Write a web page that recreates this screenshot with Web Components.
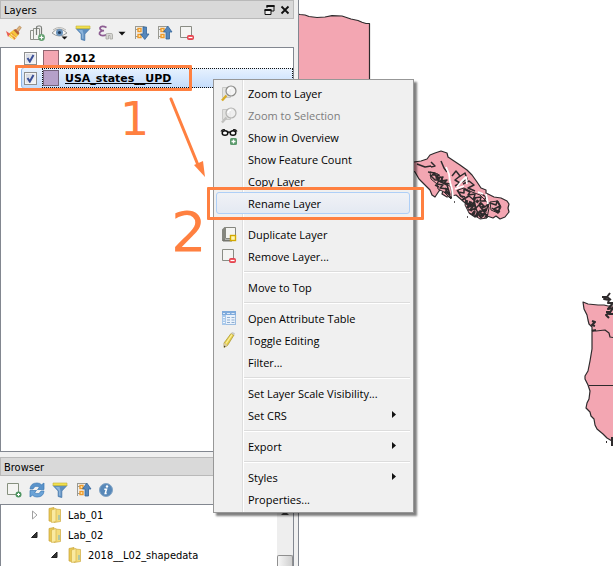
<!DOCTYPE html>
<html lang="en">
<head>
<meta charset="utf-8">
<title>Layers</title>
<style>
  html, body { height: 100%; margin: 0; }
  body { overflow: hidden; background: #fff; font: 11px/20px "DejaVu Sans Condensed", "DejaVu Sans", sans-serif; color: #000; }
</style>
</head>
<body>
<gis-window></gis-window>
<script>
const tree = '<path d="M2.5 1v13M2.5 4.5h4M2.5 11.500h4M2.5 1.500h9" fill="none" stroke="#9a9a92"/><path d="M5 3.500h3v3h-3zM5 9.500h3v3h-3z" fill="#fff3c8" stroke="#ee9a2a" stroke-width="1.400"/>';
const lens = (ring, glass, handle, page) => `<path d="M1.500 2.500h8v10h-8z" fill="${page}" stroke="#c8c8c6"/><path d="M5.500 10.500L1 15.500" stroke="${handle}" stroke-width="2.400"/><circle cx="10" cy="6" r="5" fill="${glass}" fill-opacity=".85" stroke="${ring}" stroke-width="1.200"/><path d="M7 6q0-3 3-3" fill="none" stroke="#fff" stroke-width="1.500"/>`;
const funnel = '<path d="M1 3.500h14L9.800 9v6.500l-3.600-1V9z" fill="#5f8fc0" stroke="#4679ac" stroke-width=".8"/><path d="M3.500 5h4l1 4v5l-1.500-.6V9z" fill="#8db4da"/><path d="M1 1h14v2.600H1z" fill="#f1e04d" stroke="#c6b432" stroke-width=".6"/>';
const minus = '<rect x="8.500" y="10.500" width="6" height="4" rx="1" fill="#ef4c55" stroke="#e04450"/><path d="M9.500 12.500h4" stroke="#fff" stroke-width="1.200"/>';
const plus = '<rect x="9" y="9" width="7" height="7" rx="1.500" fill="#5b9a6c"/><path d="M12.500 10.500v4M10.500 12.500h4" stroke="#fff" stroke-width="1.300"/>';
const ICONS = {
  brush: '<path d="M9 6l4.500-5 1.800 1.500L11.500 8z" fill="#e0b27a" stroke="#a87c48" stroke-width=".6"/><path d="M1.500 9.500L8 4.500l5 5-5 5q-4-1-6.500-5z" fill="#f5c63c"/><path d="M7.500 5l2-1 4 4-1.500 2z" fill="#b55f35"/><path d="M5 7l5.500 5.500L8 15z" fill="#e88035"/><path d="M0 6l4.500 3-2.500 3z" fill="#ea6055"/><path d="M3 10.500l5 4M5 9l5 4" stroke="#fff08a"/>',
  group: '<path d="M1.500 5.500h3v9h-3zM4.500 3.500h6v11h-6z" fill="#f3f3f1" stroke="#8e918a"/><path d="M7.500 10V3q0-2 2-2h1.500q1.500 0 1.500 2v6" fill="none" stroke="#777b76" stroke-width="1.200"/><circle cx="12.500" cy="12.500" r="3.400" fill="#63a070"/><path d="M12.500 10.500v4M10.500 12.500h4" stroke="#fff" stroke-width="1.200"/>',
  eye: '<path d="M0 8q7-8 15 0-8 6-15 0z" fill="#f5f5f3" stroke="#9a9c9c"/><path d="M1 5q6-5 13 0" fill="none" stroke="#b5b5b2"/><circle cx="7.500" cy="7.500" r="3.500" fill="#6b94bd"/><circle cx="7.500" cy="7.500" r="1.600" fill="#233b58"/><path d="M9.500 11.500h6l-3 3z" fill="#111"/>',
  funnel,
  epsilon: '<path d="M8.500 2.500q-5-2.500-6.500.5 0 2.500 4 2.700Q1 6 1.500 9q2 3 7.500.5" fill="none" stroke="#8d5d92" stroke-width="1.800"/><path d="M8 14V9.500q0-1 1.500-1h3.500q1.500 0 1.500 1V14h-2.500v-3.500h-1.500V14z" fill="#d7d7d4" stroke="#a4a4a0" stroke-width=".8"/>',
  caret: '<path d="M1 5.500h14L8 13z" fill="#111"/>',
  expand: tree + '<path d="M10 2h3.500v7h2.500l-4.200 5.500L7.500 9H10z" fill="#5687bb" stroke="#34649a" stroke-width=".8"/>',
  collapse: tree + '<path d="M10 14h3.500V7h2.500L11.800 1 7.500 7H10z" fill="#5687bb" stroke="#34649a" stroke-width=".8"/>',
  remove: '<path d="M1.500 1.500h11v11h-11z" fill="#f4f4f2" stroke="#8a8c84"/>' + minus,
  add: '<path d="M1.500 1.500h11v11h-11z" fill="#f4f4f2" stroke="#86907e"/><circle cx="12.500" cy="12.500" r="3" fill="#4e9461"/><path d="M12.500 11v3M11 12.500h3" stroke="#fff"/>',
  duplicate: '<path d="M1 3.500L3.500 1H6v11H4v3H1z" fill="#85867e"/><path d="M2 14.500h9" stroke="#74756e" stroke-width="2"/><path d="M4.500 1.500h10v11h-10z" fill="#f4f4f1" stroke="#85867e"/><rect x="9.500" y="9.500" width="5" height="5" fill="#fff6b0" stroke="#d2a800" stroke-width="1.400"/>',
  refresh: '<path d="M1 7Q1.500 1 8 1q3 0 4.500 1.800L15 1v6.500H8.500l2-2Q6 2.500 4 7z" fill="#5a93ca" stroke="#3c78b4" stroke-width=".7"/><path d="M15 9q-.5 6-7 6-3 0-4.500-1.800L1 15V8.500h6.500l-2 2Q10 13.500 12 9z" fill="#6ba3d7" stroke="#3c78b4" stroke-width=".7"/>',
  info: '<circle cx="8" cy="8" r="6.500" fill="#5788b9" stroke="#84a5c6"/><circle cx="9" cy="4.500" r="1.200" fill="#fff"/><path d="M6.300 7.200h2.200L7.200 11.500h1.500" fill="none" stroke="#fff" stroke-width="1.500"/>',
  zoom: lens('#8b8b88', '#f4f4f4', '#d8ac28', '#e4e4e2'),
  zoomOff: lens('#b3b3b1', '#eee', '#c0c0be', '#e2e2e0'),
  overview: '<path d="M0 2.500Q1.500 0 4 .8M16 2.500Q14.500 0 12 .8M6.500 3.500q1.500-1 3 0" fill="none" stroke="#111" stroke-width="1.300"/><ellipse cx="4" cy="4" rx="2.800" ry="2.300" fill="#fff" stroke="#111" stroke-width="1.500"/><ellipse cx="12" cy="4" rx="2.800" ry="2.300" fill="#fff" stroke="#111" stroke-width="1.500"/>' + plus,
  table: '<rect x="1.500" y="1.500" width="13" height="13" fill="#eaf2fb" stroke="#9dbde0"/><path d="M1 1h14v4H1z" fill="#7fabdc"/><path d="M1 5h4v10H1z" fill="#a8c8ea"/><path d="M2 3.500h2M6 3.500h3M10.500 3.500h3" stroke="#dce9f8"/><path d="M6 7.500h3M6 10h3M6 12.500h3M10.500 7.500h3M10.500 10h3M10.500 12.500h3" stroke="#8faed0"/><path d="M2 7.500h2M2 10h2M2 12.500h2" stroke="#f3f8fd"/>',
  pencil: '<path d="M3 11L10 1.500l3 1.500-6.500 10.500L3 15.500z" fill="#e7cf4a" stroke="#a4902e" stroke-width=".7"/><path d="M5 11.500L11 2.500" stroke="#fbf0a0" stroke-width="1.300"/><path d="M10 1l1.500-1 2.500 1.300-.8 2z" fill="#c9c9c4"/><path d="M3 11l3.500 2L3 15.500z" fill="#d9c9a4"/><path d="M3 13.500v2l1.500-1z" fill="#333"/>',
  folder: '<path d="M2 1.500l5-1v14.500L2 14z" fill="#e9c955" stroke="#c9a236" stroke-width=".7"/><path d="M7 2l6.500.5v12L7 15.500z" fill="#f3dc7c" stroke="#cfab42" stroke-width=".7"/><path d="M4.500 3l4.500-1.500v13L4.500 15.500z" fill="#faeaa0" stroke="#d6b64c" stroke-width=".7"/><path d="M12 8v5" stroke="#6eb3cf"/>',
  closed: '<path d="M5.500 4v8l4.500-4z" fill="#fff" stroke="#a0a0a0"/>',
  open: '<path d="M10 5v5.500H4.500z" fill="#333" stroke="#222"/>',
  float: '<path d="M6 6V3.500h7v5.500h-3" fill="none" stroke="#111"/><path d="M5.500 4h8" stroke="#111" stroke-width="2"/><path d="M4 8h6v4.500H4z" fill="#eee" stroke="#111"/><path d="M3.500 8h7" stroke="#111" stroke-width="2"/>',
  close: '<path d="M4.500 4.500l7 7M11.500 4.500l-7 7" stroke="#111" stroke-width="1.800"/>',
  submenu: '<path d="M6 4v7l4-3.500z" fill="#111"/>'
};

function define(name, html) {
  customElements.define(name, class extends HTMLElement {
    connectedCallback() {
      if (this.shadowRoot) return;
      const root = this.attachShadow({ mode: 'open' });
      root.innerHTML = typeof html === 'function' ? html(this) : html;
    }
  });
}

define('gis-icon', el => `<style>:host{display:inline-block;width:16px;height:16px;flex:none}svg{display:block;width:100%;height:100%;overflow:visible}</style>
<svg viewBox="0 0 16 16" aria-hidden="true">${ICONS[el.getAttribute('name')] || ''}</svg>`);

define('tool-button', el => `<style>:host{display:block}
button{display:flex;align-items:center;justify-content:center;width:23px;height:28px;padding:0;border:0;background:none}
:host([menu]) button{width:35px;gap:4px}:host([menu]) gis-icon:last-child{width:8px;height:8px}</style>
<button type="button" aria-label="${el.getAttribute('label')}"><gis-icon name="${el.getAttribute('icon')}"></gis-icon>${el.hasAttribute('menu') ? '<gis-icon name="caret"></gis-icon>' : ''}</button>`);

define('dock-panel', el => `<style>
:host{display:flex;flex-direction:column;min-height:0}
header{display:flex;align-items:center;box-sizing:border-box;height:19px;padding-left:3px;border:1px solid #b9b9b9;background:#d9d9d9}
h2{flex:1;margin:0;padding-top:2px;font:inherit;line-height:17px}
header button{width:16px;height:17px;padding:0;border:0;background:none}
header gis-icon{display:block}
.tools{display:flex;align-items:center;height:28px;padding:0 2px}
.body{flex:1;min-height:0;display:flex;overflow:hidden;border:1px solid #828790;background:#fff}
.rows{flex:1;min-width:0}
</style>
<header><h2>${el.getAttribute('heading')}</h2><button type="button" aria-label="Float"><gis-icon name="float"></gis-icon></button><button type="button" aria-label="Close"><gis-icon name="close"></gis-icon></button></header>
<div class="tools" role="toolbar"><slot name="tools"></slot></div>
<div class="body"><div class="rows"><slot></slot></div><slot name="scroll"></slot></div>`);

define('layer-row', el => `<style>
:host{display:flex;height:20px;padding-left:20px;font:bold 11px/20px "DejaVu Sans",sans-serif;--c:${el.getAttribute('colour')}}
.row{flex:1;display:flex;align-items:center;padding-left:3px}
input{appearance:none;box-sizing:border-box;width:13px;height:13px;margin:0 5px 0 0;border:1px solid #8e8f8f;outline:1px solid #f4f4f4;outline-offset:-2px;background:linear-gradient(135deg,#cdd2dc,#fbfbfb)}
input:checked{background:url("data:image/svg+xml,%3Csvg xmlns='http://www.w3.org/2000/svg' viewBox='0 0 11 11'%3E%3Cpath d='M2.500 5l2.300 3.500L8.500 2' fill='none' stroke='%233b4f96' stroke-width='2'/%3E%3C/svg%3E"),linear-gradient(135deg,#cdd2dc,#fbfbfb)}
label{flex:1;display:flex;align-items:center;box-sizing:border-box;height:20px;border:1px solid transparent}
i{width:14px;height:14px;margin-right:6px;border:1px solid rgba(60,50,60,.55);background:var(--c)}
span{padding-top:2px;line-height:18px}
:host([selected]) .row{border-radius:3px 0 0 3px;background:linear-gradient(#e8f2fe,#c3dcfc);box-shadow:inset 1px 0 #8fb5e4}
:host([selected]) label{border:1px dotted #111}
:host([selected]) span{text-decoration:underline}
</style><div class="row"><input type="checkbox" id="c" checked><label for="c"><i></i><span><slot></slot></span></label></div>`);

define('tree-item', el => `<style>
:host{display:flex;align-items:center;height:20px;white-space:nowrap;padding-left:calc(26px + 20px * ${el.getAttribute('level')})}
gis-icon{margin-right:4px}gis-icon+gis-icon{margin-right:5px}
span{padding-top:2px}
</style><gis-icon name="${el.getAttribute('state')}"></gis-icon><gis-icon name="folder"></gis-icon><span><slot></slot></span>`);

define('scroll-strip', `<style>
:host{display:flex;flex-direction:column;width:16px;background:#eee}
.up{height:16px;display:flex;justify-content:center;align-items:center}
.up::before{content:"";border:4px solid transparent;border-top:0;border-bottom:4px solid #444}
.gap{flex:1}.thumb{box-sizing:border-box;height:11px;border:1px solid #8f8f8f;border-bottom:0;border-radius:2px 2px 0 0;background:linear-gradient(90deg,#f6f6f6,#cfcfcf)}
</style><div class="up"></div><div class="gap"></div><div class="thumb"></div>`);

define('menu-item', el => `<style>
:host{display:block}
button{display:flex;align-items:center;box-sizing:border-box;width:100%;height:22px;padding:0 7px 0 4px;border:1px solid transparent;border-radius:3px;background:none;color:#000;font:11px/18px "Open Sans","Noto Sans",sans-serif;text-align:left;white-space:nowrap}
button:disabled{color:#7d7d7d}
gis-icon:first-child{margin-right:11px}
span{flex:1;padding-top:2px}
:host([active]) button{border-color:#aecff7;background:linear-gradient(#f0f2f6,#e4e9f2)}
</style><button type="button" role="menuitem" ${el.hasAttribute('disabled') ? 'disabled' : ''}><gis-icon name="${el.getAttribute('icon') || ''}"></gis-icon><span><slot></slot></span>${el.hasAttribute('sub') ? '<gis-icon name="submenu"></gis-icon>' : ''}</button>`);

define('menu-line', `<style>:host{display:block;height:1px;margin:4px 0 3px 28px;border-bottom:1px solid #fff;background:#dcdcdc}</style>`);

define('context-menu', `<style>
:host{display:block;box-sizing:border-box;width:201px;padding:2px 3px 2px 2px;border:1px solid #979797;background:linear-gradient(90deg,transparent 28px,#dedede 28px 29px,#fff 29px 30px,transparent 30px) #f0f0f0;box-shadow:3px 3px 2px rgba(0,0,0,.5)}
</style><div role="menu"><slot></slot></div>`);

define('map-canvas', `<style>:host{display:block;min-width:0;overflow:hidden;border-left:1px solid #828790;background:#fff}svg{display:block;width:100%;height:100%}</style>
<svg role="img" aria-label="Map"><g transform="translate(-299 0)" fill="#f3a6b2" stroke="#2e2a2c" stroke-width="1.200" stroke-linejoin="round">
<path d="M290 13l10 1.500 5 .5 4 1.500 8 1 8-.5 7-1.300 10 .3 9 3 7 1.500 4 1.800 4 1.200h3.500V90h-80z"/>
<path d="M400 163l14-1 7-1 6-2 3-4 5-2 6-2 6 2 1 4 6 4 6 4 7 5 5 5 5 7 4 6 5 2 0 3 8 4 7 1 6 3 2 3-1 4 1 4-4 5-5 2-4-3-3 2-6-2-2-5-5-3-3 3-5-4-8-5-8-7-9 2-5-3 2-7-5 4-4 6-3-2-2-5-6-6-5-5-4-7-8-4-8 1z"/>
<path stroke-width="1" d="M458 190l6-2 8 4 8 3 7 7 2 6-2 10-7 1-6-4-5-2-4-8 1-5-6-4zM490 202l8-1 3 6-3 6-7-3zM430 172l8 2 7 9 6 4 1 9-1 3-7-7-6-3-1-5-6-5z"/>
<path fill="none" stroke-width="1.500" d="M417 164l8 3 6-1M431 162l4 4-4 1M441 161l3 7 3 4M428 172l7 1-3 2 7 0-3 3 7-1-2 4 6-1-3 3 7 1M430 175l5 5 4 0-2 4 6 1-3 3 8 1-3 3 5 3M434 173l5 8 8 4 3 10M445 188l6 10M452 176l4-5 4 5-5 4 5 3-5 3M459 177l6-4 2 6-5 3M463 184l6-3 5 4-6 3 7 3M458 192l6 1 0-4 6 3-2 3 7-1-1 4 7-1-1 4 6 0M457 190l4 6 4 1M462 200l7-4 6 5-4 4-6-3M467 207l6-4 3 5 5-5 4 4 4-4-3 8M468 210l8-1 2 4 8-4-2 5 4 1M469 213l6 4 3-5 3 6 4-5 2 5M474 200l2 9 4 8M465 203l8 5M480 193l6 4-2 4M479 205l5 7M490 203l6 2 1-4 3 5-6 3 6 3M492 208l6 5 2-7M435 185l4 2"/>
<path fill="none" stroke="#2e2a2c" stroke-width="3" stroke-dasharray="3 1" d="M465 201l6 2 5 7M467 206l8 7 8 2M473 198l9 7 4 8M437 178l7 5M479 211l7 6M472 213l7 4"/>
<path fill="none" stroke="#fff" stroke-width="1.800" d="M446 167l3 7 1 8 2 7 1 9 2 6M457 187l4-5 5-5 1 7M455 189l9-3M486 194l2 10M478 192l5 2"/>
<path stroke-width="1.500" d="M454 202h1M467 217h1"/>
<path d="M583 302l5 2 10 1 6 0 4 1h12v140h-3l-5-5-5-3-4-4-6-5-2-4-1-6-3-3-1-4-4-4 1-5 2-4 1-8-2-6-3-6v-3l3-5 2-10 2-12 0-22-3-3-1-4-1-5-3-6z"/>
<path fill="none" d="M592 330l4 1 9-1 4 3 1 4 6 1M589 385.500h25"/>
<path fill="none" stroke-width="2" d="M602 297l5 0-3 2 5 1-1 3 5 0M610 293l-3 4 4 3M606 312l4 0-4 3 3 3M613 303l-5 6 5-1-4 6 4 0M592 321l3 1-3 3 3 1M592 331l4-1M606 442h1M612 437v9"/>
</g></svg>`);

define('mark-frame', `<style>:host{display:block;box-sizing:border-box;border:3px solid #ff8040;border-radius:1px}</style>`);

define('step-mark', `<style>:host{display:block;color:#ff8040;font-family:"DejaVu Sans",sans-serif;line-height:1}</style><slot></slot>`);

define('mark-arrow', `<style>:host{display:block;width:40px;height:84px}svg{display:block;width:100%;height:100%}</style>
<svg viewBox="0 0 40 84" aria-hidden="true"><path d="M6 4L33 70" stroke="#ff8040" stroke-width="3" stroke-linecap="round"/><path d="M29 70l9-4 2 16z" fill="#ff8040"/></svg>`);

define('gis-window', `<style>
:host{position:relative;display:grid;grid-template-columns:294px minmax(0,1fr);column-gap:4px;height:100vh;overflow:hidden;background:#f0f0f0}
.side{display:flex;flex-direction:column;gap:5px;min-height:0}
.side dock-panel:first-child{flex:1}
.side dock-panel:last-child{height:110px;margin-bottom:-1px}
context-menu,mark-frame,step-mark,mark-arrow{position:absolute}
context-menu{left:213px;top:79px}
.f1{left:15px;top:65px;width:177px;height:26px}
.f2{left:207px;top:187px;width:217px;height:33px}
.s1{left:120px;top:96px;font-size:46px}
.s2{left:171px;top:204px;font-size:56px}
mark-arrow{left:165px;top:95px}
</style>
<div class="side">
<dock-panel heading="Layers">
<tool-button slot="tools" icon="brush" label="Layer styling"></tool-button><tool-button slot="tools" icon="group" label="Add group"></tool-button><tool-button slot="tools" icon="eye" label="Visibility"></tool-button><tool-button slot="tools" icon="funnel" label="Filter legend"></tool-button><tool-button slot="tools" icon="epsilon" menu label="Filter by expression"></tool-button><tool-button slot="tools" icon="expand" label="Expand all"></tool-button><tool-button slot="tools" icon="collapse" label="Collapse all"></tool-button><tool-button slot="tools" icon="remove" label="Remove layer"></tool-button>
<layer-row colour="#f3a6b2">2012</layer-row><layer-row colour="#b5a0c9" selected>USA_states__UPD</layer-row>
</dock-panel>
<dock-panel heading="Browser">
<tool-button slot="tools" icon="add" label="Add layer"></tool-button><tool-button slot="tools" icon="refresh" label="Refresh"></tool-button><tool-button slot="tools" icon="funnel" label="Filter browser"></tool-button><tool-button slot="tools" icon="collapse" label="Collapse all"></tool-button><tool-button slot="tools" icon="info" label="Properties"></tool-button>
<tree-item level="0" state="closed">Lab_01</tree-item><tree-item level="0" state="open">Lab_02</tree-item><tree-item level="1" state="open">2018__L02_shapedata</tree-item>
<scroll-strip slot="scroll"></scroll-strip>
</dock-panel>
</div>
<map-canvas></map-canvas>
<context-menu>
<menu-item icon="zoom">Zoom to Layer</menu-item><menu-item icon="zoomOff" disabled>Zoom to Selection</menu-item><menu-item icon="overview">Show in Overview</menu-item><menu-item>Show Feature Count</menu-item><menu-item>Copy Layer</menu-item><menu-item active>Rename Layer</menu-item>
<menu-line></menu-line>
<menu-item icon="duplicate">Duplicate Layer</menu-item><menu-item icon="remove">Remove Layer...</menu-item>
<menu-line></menu-line>
<menu-item>Move to Top</menu-item>
<menu-line></menu-line>
<menu-item icon="table">Open Attribute Table</menu-item><menu-item icon="pencil">Toggle Editing</menu-item><menu-item>Filter...</menu-item>
<menu-line></menu-line>
<menu-item>Set Layer Scale Visibility...</menu-item><menu-item sub>Set CRS</menu-item>
<menu-line></menu-line>
<menu-item sub>Export</menu-item>
<menu-line></menu-line>
<menu-item sub>Styles</menu-item><menu-item>Properties...</menu-item>
</context-menu>
<mark-frame class="f1"></mark-frame><mark-frame class="f2"></mark-frame>
<step-mark class="s1">1</step-mark><step-mark class="s2">2</step-mark>
<mark-arrow></mark-arrow>`);
</script>
</body>
</html>
